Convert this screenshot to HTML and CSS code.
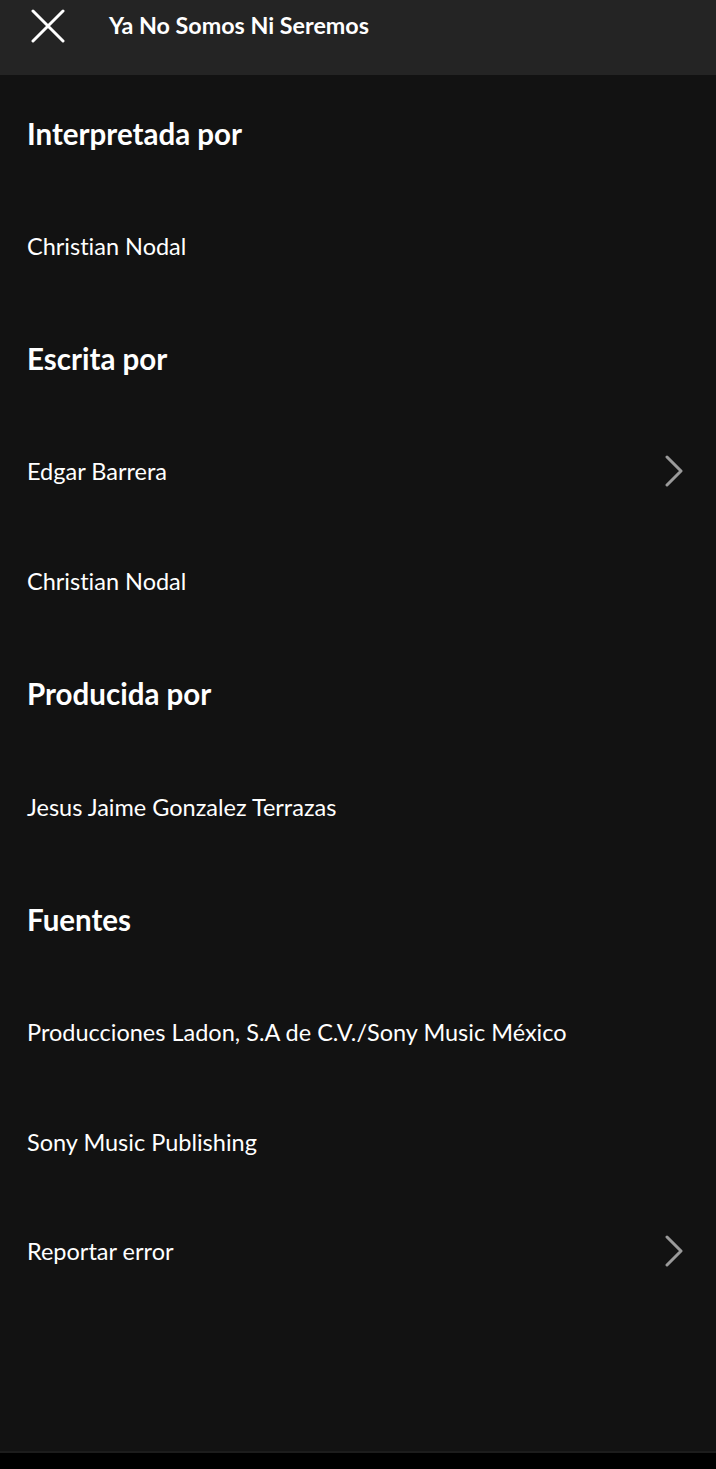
FILE: index.html
```html
<!DOCTYPE html>
<html lang="es">
<head>
    <meta charset="UTF-8">
    <meta name="viewport" content="width=device-width, initial-scale=1.0">
    <title>Créditos</title>
    <link rel="stylesheet" href="styles.css">
</head>
<body>
    <div class="app">
        <header class="topbar">
            <button class="close-btn" aria-label="Cerrar">
                <svg width="34" height="34" viewBox="0 0 34 34">
                    <path d="M2 2 L32 32 M32 2 L2 32" stroke="#fff" stroke-width="3" stroke-linecap="round"/>
                </svg>
            </button>
            <h1 class="title">Ya No Somos Ni Seremos</h1>
        </header>

        <main class="credits">
            <h2 class="section-title">Interpretada por</h2>
            <div class="row">Christian Nodal</div>

            <h2 class="section-title">Escrita por</h2>
            <div class="row">
                <span>Edgar Barrera</span>
                <svg class="chevron" width="22" height="32" viewBox="0 0 22 32">
                    <path d="M4 2 L18 16 L4 30" fill="none" stroke="#9a9a9a" stroke-width="3" stroke-linecap="round" stroke-linejoin="round"/>
                </svg>
            </div>
            <div class="row">Christian Nodal</div>

            <h2 class="section-title">Producida por</h2>
            <div class="row">Jesus Jaime Gonzalez Terrazas</div>

            <h2 class="section-title">Fuentes</h2>
            <div class="row">Producciones Ladon, S.A de C.V./Sony Music México</div>
            <div class="row">Sony Music Publishing</div>
            <div class="row">
                <span>Reportar error</span>
                <svg class="chevron" width="22" height="32" viewBox="0 0 22 32">
                    <path d="M4 2 L18 16 L4 30" fill="none" stroke="#9a9a9a" stroke-width="3" stroke-linecap="round" stroke-linejoin="round"/>
                </svg>
            </div>
        </main>

        <div class="navbar"></div>
    </div>
</body>
</html>
```

FILE: styles.css
```css
body {
    margin: 0;
    padding: 0;
    background-color: #000;
    font-family: Lato, "Noto Sans", sans-serif;
    font-variant-ligatures: none;
    color: #fff;
}

.app {
    height: 1469px;
    display: flex;
    flex-direction: column;
    background-color: #121212;
}

.topbar {
    height: 75px;
    display: flex;
    align-items: center;
    background-color: #242424;
}

.close-btn {
    background: none;
    border: none;
    padding: 0;
    margin: -24px 0 0 31px;
    width: 34px;
    height: 34px;
    cursor: pointer;
}

.title {
    margin: -25px 0 0 44px;
    font-size: 23.3px;
    font-weight: 700;
}

.credits {
    flex: 1;
    display: flex;
    flex-direction: column;
    padding: 0 32px 0 27px;
}

.section-title {
    margin: 0;
    height: 116px;
    display: flex;
    align-items: center;
    font-size: 29.5px;
    font-weight: 700;
}

.row {
    height: 109.6px;
    display: flex;
    align-items: center;
    justify-content: space-between;
    font-size: 23.5px;
}

.chevron {
    margin-right: -1px;
}

.navbar {
    height: 16px;
    background-color: #000;
    border-top: 2px solid #1c1c1c;
}
```
